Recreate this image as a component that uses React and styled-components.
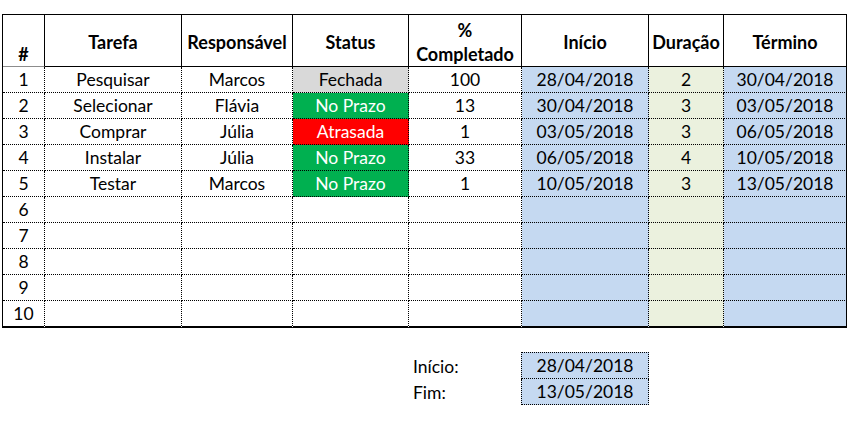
import React from "react";
import styled, { createGlobalStyle } from "styled-components";

// column widths of the sheet, each one including its right border
const columns = "42px 137px 111px 116px 113px 127px 75px 123px";

const BLUE = "#c5d9f1";
const SAGE = "#ebf1de";

const statusColors = {
  Fechada: { fill: "#d9d9d9", ink: "#000" },
  "No Prazo": { fill: "#00b050", ink: "#fff" },
  Atrasada: { fill: "#ff0000", ink: "#fff" },
};

const tasks = [
  { id: 1, task: "Pesquisar", owner: "Marcos", status: "Fechada", done: 100, start: "28/04/2018", days: 2, end: "30/04/2018" },
  { id: 2, task: "Selecionar", owner: "Flávia", status: "No Prazo", done: 13, start: "30/04/2018", days: 3, end: "03/05/2018" },
  { id: 3, task: "Comprar", owner: "Júlia", status: "Atrasada", done: 1, start: "03/05/2018", days: 3, end: "06/05/2018" },
  { id: 4, task: "Instalar", owner: "Júlia", status: "No Prazo", done: 33, start: "06/05/2018", days: 4, end: "10/05/2018" },
  { id: 5, task: "Testar", owner: "Marcos", status: "No Prazo", done: 1, start: "10/05/2018", days: 3, end: "13/05/2018" },
];

const GlobalStyle = createGlobalStyle`
  body {
    margin: 0;
    background: #fff;
    font-family: Lato, "Open Sans", sans-serif;
    color: #000;
  }
`;

const Sheet = styled.div`
  display: grid;
  grid-template-columns: ${columns};
  width: fit-content;
  margin: 14px 0 0 2px;
  border-left: 1px solid #000;
  border-top: 1px solid #000;
`;

const HeadCell = styled.div`
  box-sizing: border-box;
  height: 52px;
  display: flex;
  flex-direction: column;
  align-items: center;
  justify-content: ${(p) => (p.$bottom ? "flex-end" : "center")};
  padding: ${(p) => (p.$bottom ? "0" : "2px 0 0")};
  border-right: 1px solid #000;
  border-bottom: 1px solid ${(p) => (p.$soft ? "#8c8c8c" : "#000")};
  font-size: 18px;
  font-weight: 700;
  line-height: 24px;
  text-align: center;
  white-space: nowrap;
`;

const Cell = styled.div`
  box-sizing: border-box;
  height: ${(p) => (p.$lastRow ? "27px" : "26px")};
  display: flex;
  align-items: center;
  justify-content: center;
  background: ${(p) => p.$fill || "transparent"};
  color: ${(p) => p.$ink || "#000"};
  border-right: 1px ${(p) => (p.$edge ? "solid" : "dotted")} #000;
  border-bottom: ${(p) => (p.$lastRow ? "2px solid #000" : "1px dotted #000")};
  font-size: 17.5px;
  white-space: nowrap;
`;

const Summary = styled.div`
  display: grid;
  grid-template-columns: ${columns};
  width: fit-content;
  margin: 24px 0 0 3px;
`;

const SummaryLabel = styled.div`
  grid-column: 5;
  box-sizing: border-box;
  height: ${(p) => (p.$first ? "27px" : "26px")};
  display: flex;
  align-items: center;
  padding: ${(p) => (p.$first ? "1px 0 0 4px" : "0 0 0 4px")};
  font-size: 17.5px;
`;

const SummaryValue = styled.div`
  grid-column: 6;
  box-sizing: border-box;
  height: ${(p) => (p.$first ? "27px" : "26px")};
  display: flex;
  align-items: center;
  justify-content: center;
  margin-left: -1px;
  background: ${BLUE};
  border: 1px dotted #000;
  border-top-style: ${(p) => (p.$first ? "dotted" : "none")};
  font-size: 17.5px;
`;

const rows = Array.from({ length: 10 }, (_, i) => tasks[i] || { id: i + 1 });

const App = () => {
  return (
    <>
      <GlobalStyle />
      <Sheet>
        <HeadCell $bottom $soft>#</HeadCell>
        <HeadCell>Tarefa</HeadCell>
        <HeadCell>Responsável</HeadCell>
        <HeadCell>Status</HeadCell>
        <HeadCell>
          <span>%</span>
          <span>Completado</span>
        </HeadCell>
        <HeadCell>Início</HeadCell>
        <HeadCell>Duração</HeadCell>
        <HeadCell>Término</HeadCell>

        {rows.map((r, i) => {
          const last = i === rows.length - 1;
          const status = statusColors[r.status] || {};
          return (
            <React.Fragment key={r.id}>
              <Cell $lastRow={last}>{r.id}</Cell>
              <Cell $lastRow={last}>{r.task}</Cell>
              <Cell $lastRow={last}>{r.owner}</Cell>
              <Cell $lastRow={last} $fill={status.fill} $ink={status.ink}>
                {r.status}
              </Cell>
              <Cell $lastRow={last}>{r.done}</Cell>
              <Cell $lastRow={last} $fill={BLUE}>{r.start}</Cell>
              <Cell $lastRow={last} $fill={SAGE}>{r.days}</Cell>
              <Cell $lastRow={last} $fill={BLUE} $edge>{r.end}</Cell>
            </React.Fragment>
          );
        })}
      </Sheet>

      <Summary>
        <SummaryLabel $first>Início:</SummaryLabel>
        <SummaryValue $first>28/04/2018</SummaryValue>
        <SummaryLabel>Fim:</SummaryLabel>
        <SummaryValue>13/05/2018</SummaryValue>
      </Summary>
    </>
  );
};

export default App;
